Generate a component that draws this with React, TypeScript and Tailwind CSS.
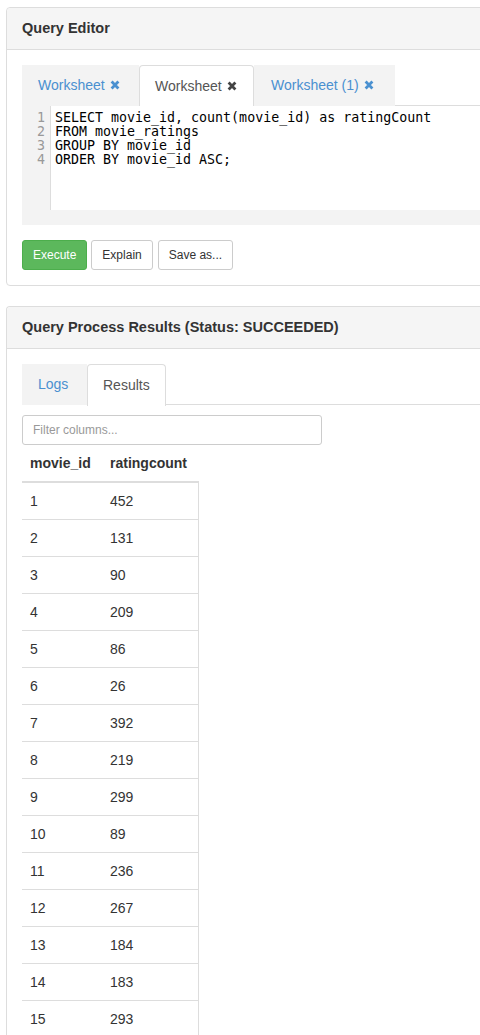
import React from "react";

const XIcon = ({ color }: { color: string }) => (
  <svg width="10" height="10" viewBox="0 0 10 10" className="inline-block ml-[5px] -mt-[2px] align-middle">
    <path d="M1.6 1.6 L8.4 8.4 M8.4 1.6 L1.6 8.4" stroke={color} strokeWidth="2.8" strokeLinecap="butt" />
  </svg>
);

const rows: [number, number][] = [
  [1, 452],
  [2, 131],
  [3, 90],
  [4, 209],
  [5, 86],
  [6, 26],
  [7, 392],
  [8, 219],
  [9, 299],
  [10, 89],
  [11, 236],
  [12, 267],
  [13, 184],
  [14, 183],
  [15, 293],
];

const code = [
  "SELECT movie_id, count(movie_id) as ratingCount",
  "FROM movie_ratings",
  "GROUP BY movie_id",
  "ORDER BY movie_id ASC;",
];

export default function App() {
  return (
    <div
      className="w-[480px] h-[1035px] overflow-hidden bg-white text-[#333] text-[14px]"
      style={{ fontFamily: '"Liberation Sans", Arial, sans-serif' }}
    >
      <div className="pt-[7px] pl-[6px]">
        {/* Panel 1 */}
        <div className="w-[520px] border border-[#ddd] rounded-[4px] bg-white">
          <div className="h-[42px] bg-[#f5f5f5] border-b border-[#ddd] rounded-t-[4px] flex items-center pl-[15px]">
            <span className="font-bold text-[14.5px]">Query Editor</span>
          </div>
          <div className="px-[15px] pt-[15px] pb-[15px]">
            {/* tabs */}
            <div className="flex h-[42px]">
              <div className="w-[117px] h-[41px] bg-[#f3f3f3] flex items-center pl-[16px] text-[#4a90d0]">
                Worksheet
                <XIcon color="#4a90d0" />
              </div>
              <div className="w-[115px] h-[42px] bg-white border border-[#ddd] border-b-0 rounded-t-[4px] flex items-center pl-[15px] text-[#555]">
                Worksheet
                <XIcon color="#444" />
              </div>
              <div className="w-[141px] h-[41px] bg-[#f3f3f3] flex items-center pl-[17px] text-[#4a90d0]">
                Worksheet (1)
                <XIcon color="#4a90d0" />
              </div>
              <div className="flex-1 h-[41px] border-b border-[#ddd]"></div>
            </div>
            {/* editor */}
            <div className="bg-[#f3f3f3] h-[119px] -mt-[1px] flex flex-col">
              <div className="flex h-[104px]">
                <div
                  className="w-[29px] border-r border-[#ddd] pt-[5px] pr-[5px] text-right text-[#999] text-[13.3px] leading-[14px]"
                  style={{ fontFamily: '"DejaVu Sans Mono", monospace' }}
                >
                  {code.map((_, i) => (
                    <div key={i}>{i + 1}</div>
                  ))}
                </div>
                <div
                  className="flex-1 bg-white pt-[5px] pl-[4px] text-[13.3px] leading-[14px] text-black whitespace-pre"
                  style={{ fontFamily: '"DejaVu Sans Mono", monospace' }}
                >
                  {code.map((l, i) => (
                    <div key={i}>{l}</div>
                  ))}
                </div>
              </div>
            </div>
            {/* buttons */}
            <div className="flex gap-[4px] mt-[15px] text-[12px]">
              <button className="h-[30px] px-[10px] rounded-[3px] bg-[#5cb85c] border border-[#4cae4c] text-white">
                Execute
              </button>
              <button className="h-[30px] px-[10px] rounded-[3px] bg-white border border-[#ccc] text-[#333]">
                Explain
              </button>
              <button className="h-[30px] px-[10px] ml-[1px] rounded-[3px] bg-white border border-[#ccc] text-[#333]">
                Save as...
              </button>
            </div>
          </div>
        </div>

        {/* Panel 2 */}
        <div className="w-[520px] mt-[20px] border border-[#ddd] border-b-0 rounded-t-[4px] bg-white">
          <div className="h-[42px] bg-[#f5f5f5] border-b border-[#ddd] rounded-t-[4px] flex items-center pl-[15px]">
            <span className="font-bold text-[14.5px]">Query Process Results (Status: SUCCEEDED)</span>
          </div>
          <div className="px-[15px] pt-[15px]">
            <div className="flex h-[42px]">
              <div className="w-[65px] h-[41px] bg-[#f3f3f3] flex items-center pl-[16px] text-[#4a90d0]">Logs</div>
              <div className="w-[79px] h-[42px] bg-white border border-[#ddd] border-b-0 rounded-t-[4px] flex items-center pl-[15px] text-[#555]">
                Results
              </div>
              <div className="flex-1 h-[41px] border-b border-[#ddd]"></div>
            </div>
            <div className="mt-[9px] w-[300px] h-[30px] border border-[#ccc] rounded-[3px] flex items-center pl-[10px] text-[12px] text-[#999]">
              Filter columns...
            </div>
            <table className="border-collapse text-[14px]">
              <thead>
                <tr>
                  <th className="text-left font-bold px-[8px] py-[8px] leading-[20px] border-b-2 border-[#ddd] w-[80px]">
                    movie_id
                  </th>
                  <th className="text-left font-bold px-[8px] py-[8px] leading-[20px] border-b-2 border-[#ddd] w-[96px]">
                    ratingcount
                  </th>
                </tr>
              </thead>
              <tbody>
                {rows.map(([a, b], i) => (
                  <tr key={a}>
                    <td className={`px-[8px] py-[8px] leading-[20px] ${i > 0 ? "border-t" : ""} border-[#ddd]`}>{a}</td>
                    <td className={`px-[8px] py-[8px] leading-[20px] ${i > 0 ? "border-t" : ""} border-r border-[#ddd]`}>{b}</td>
                  </tr>
                ))}
              </tbody>
            </table>
          </div>
        </div>
      </div>
    </div>
  );
}
